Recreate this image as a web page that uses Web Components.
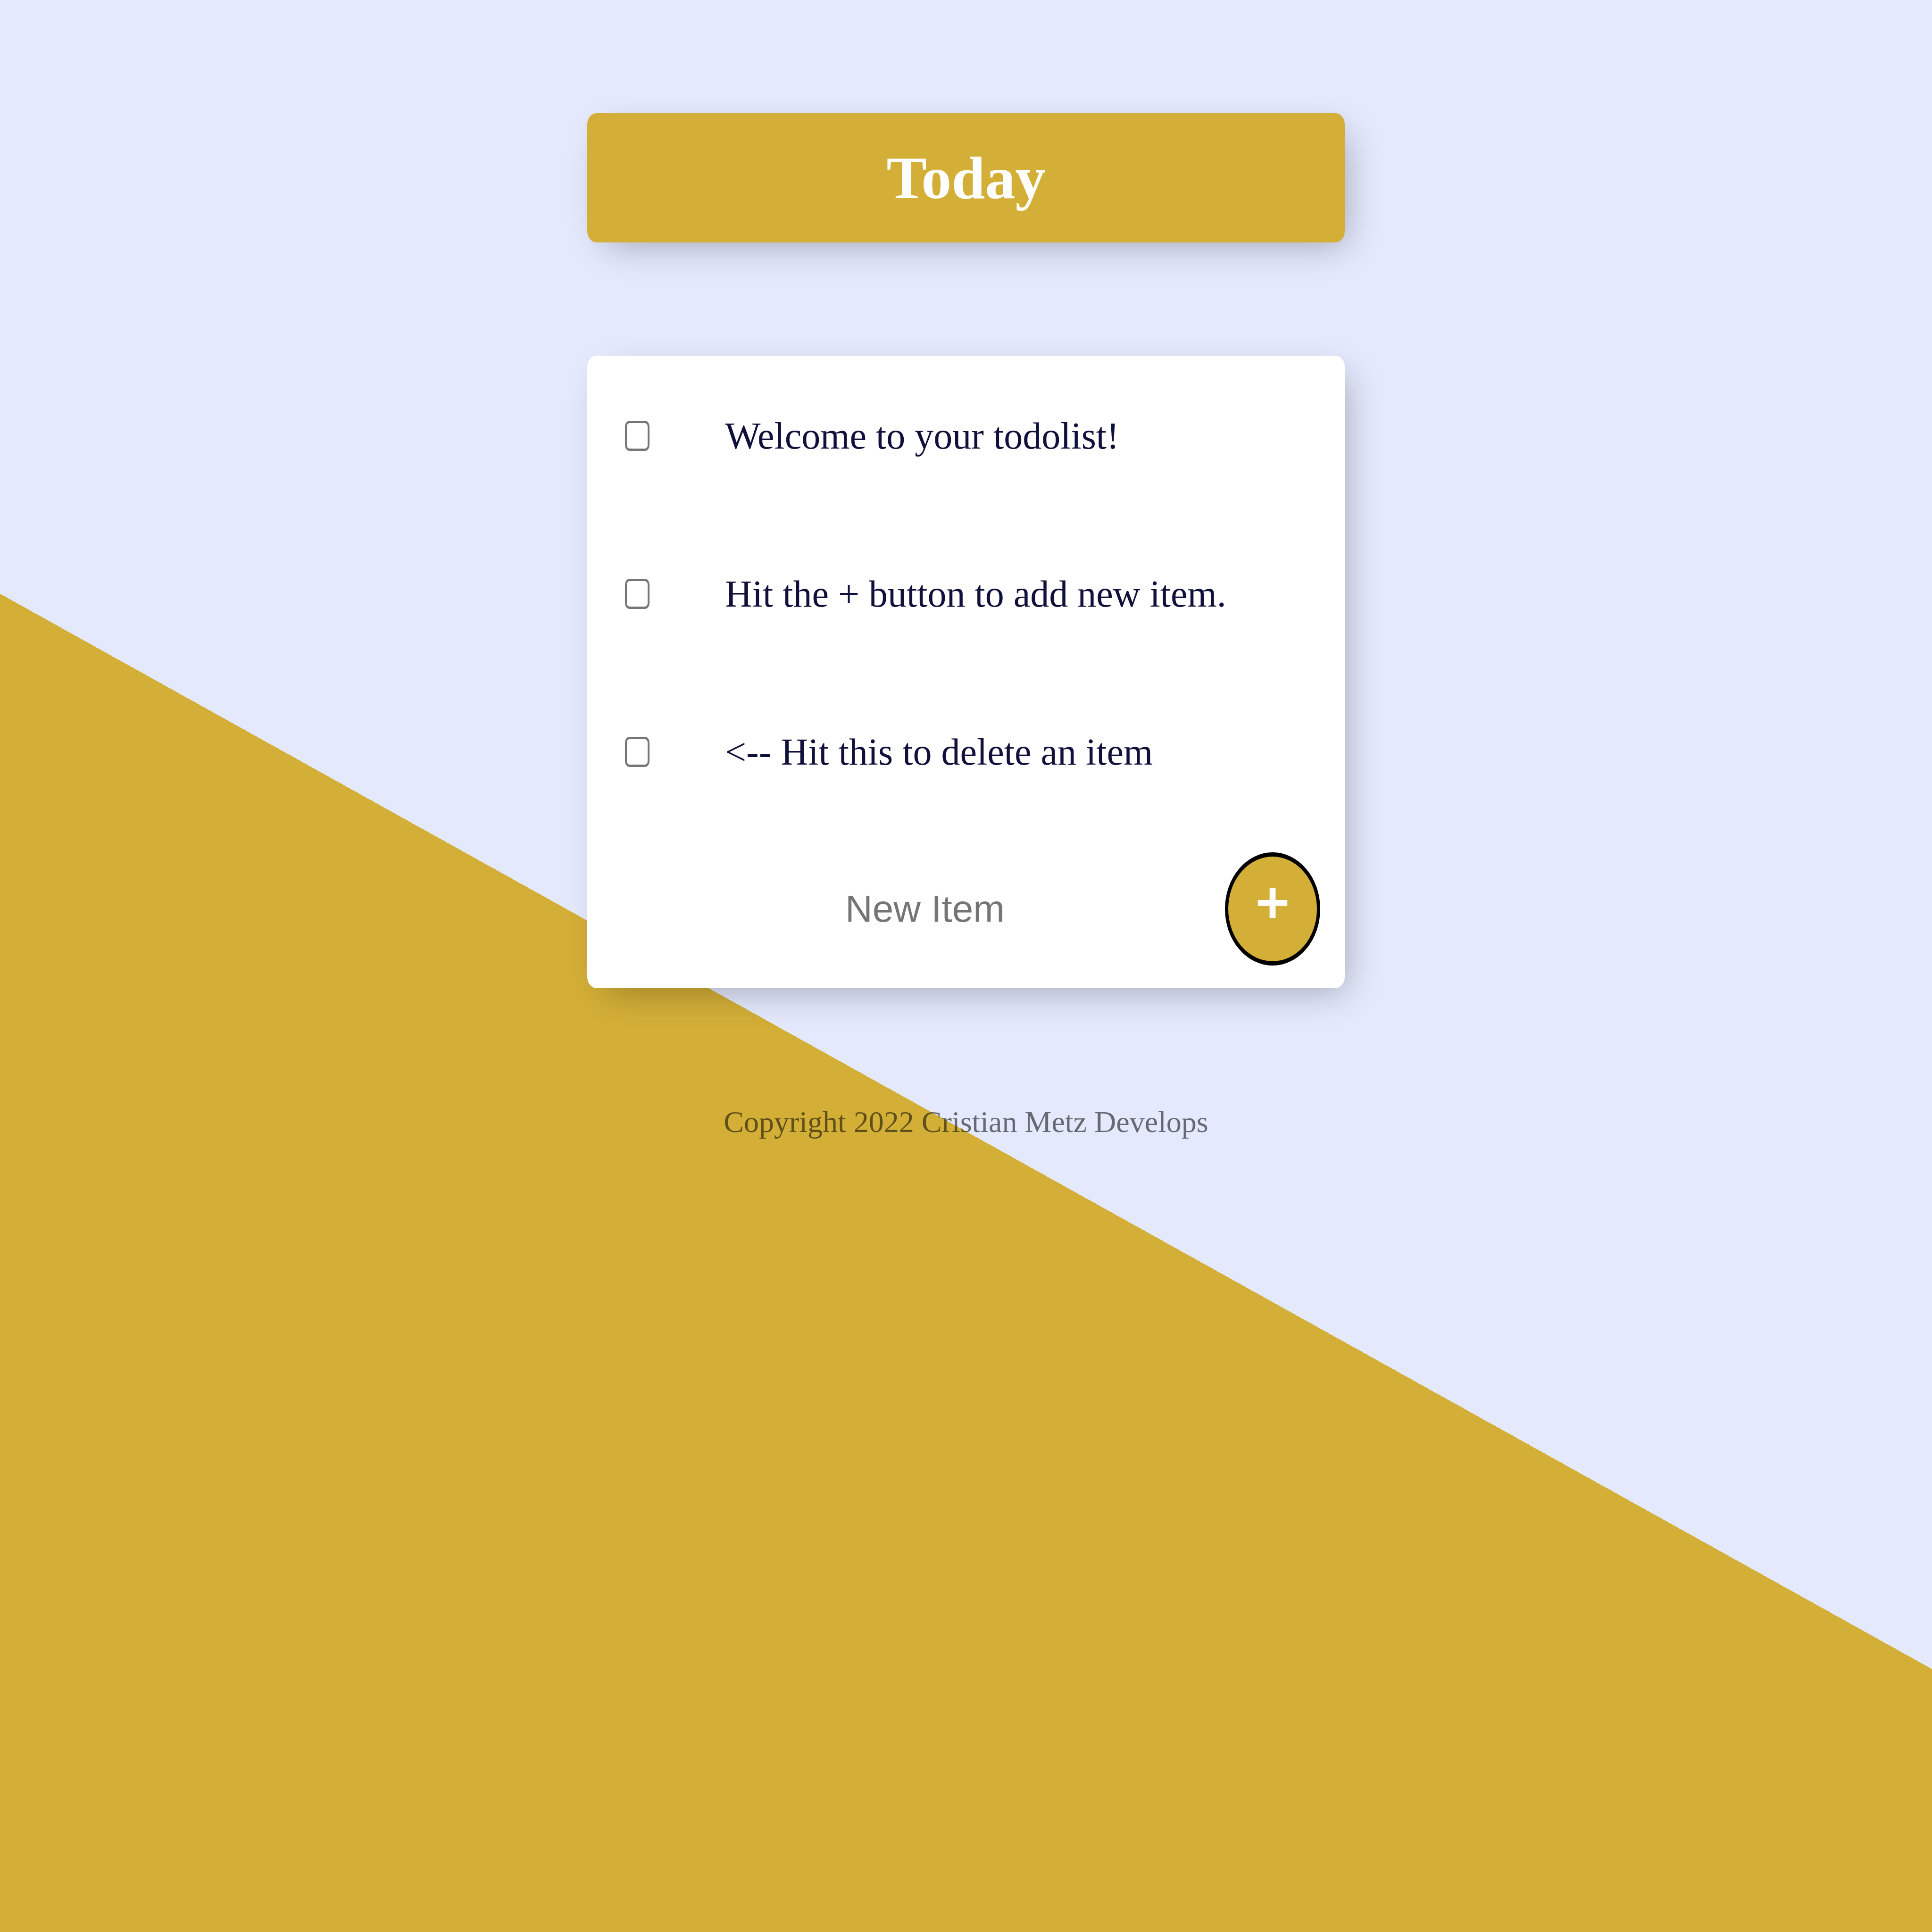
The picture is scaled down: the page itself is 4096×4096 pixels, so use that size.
<!DOCTYPE html>
<html lang="en">
<head>
<meta charset="utf-8">
<title>To Do List</title>
<style>
  html { height: 100%; }
  body {
    margin: 0;
    min-height: 100%;
    --gold: #d3af37;
    --ink: #10103c;
    background: linear-gradient(29.1deg, #d3af37 44.5%, #e4e9fd 44.5%) no-repeat;
    font-family: "Liberation Serif", "Times New Roman", serif;
  }
</style>
</head>
<body>
<todo-page>
  <todo-heading slot="heading">Today</todo-heading>
  <todo-list>
    <todo-item>Welcome to your todolist!</todo-item>
    <todo-item>Hit the + button to add new item.</todo-item>
    <todo-item>&lt;-- Hit this to delete an item</todo-item>
    <todo-form slot="form"></todo-form>
  </todo-list>
  <todo-footer slot="footer">Copyright 2022 Cristian Metz Develops</todo-footer>
</todo-page>
<script>
const define = (name, html) => {
  const template = document.createElement('template');
  template.innerHTML = html;
  customElements.define(name, class extends HTMLElement {
    constructor() {
      super();
      this.attachShadow({ mode: 'open' }).append(template.content.cloneNode(true));
    }
  });
};

const card = `
  border-radius: 20px / 24px;
  box-shadow: 20px 24px 72px -20px rgba(0, 0, 0, .3);
`;

define('todo-page', `
  <style>
    :host { display: block; }
    main {
      display: flex; flex-direction: column; gap: 240px;
      box-sizing: border-box; width: 1606px; max-width: 100%;
      margin: 0 auto; padding-top: 240px;
    }
  </style>
  <main>
    <slot name="heading"></slot>
    <slot></slot>
    <slot name="footer"></slot>
  </main>`);

define('todo-heading', `
  <style>
    :host { display: block; background: var(--gold); padding: 64px; ${card} }
    h1 { margin: 0; font-size: 128px; line-height: 146px; text-align: center; color: #fff; }
  </style>
  <h1><slot></slot></h1>`);

define('todo-list', `
  <style>
    :host { display: block; background: #fff; ${card} }
  </style>
  <slot></slot><slot name="form"></slot>`);

define('todo-item', `
  <style>
    :host { display: block; }
    label {
      display: flex; align-items: center; gap: 160px;
      box-sizing: border-box; min-height: 335px; padding: 4px 80px 0;
      font-size: 80px; line-height: 96px; color: var(--ink);
    }
    input {
      appearance: none; flex: none; box-sizing: border-box;
      width: 52px; height: 64px; margin: 0;
      border: solid #767676; border-width: 5px 4px;
      border-radius: 10px / 12px; background: #fff;
    }
    input:checked { background: var(--gold); }
    input:checked + span { text-decoration: line-through; }
  </style>
  <label><input type="checkbox"><span><slot></slot></span></label>`);

define('todo-form', `
  <style>
    :host { display: block; }
    form {
      display: flex; align-items: center;
      box-sizing: border-box; min-height: 336px; padding: 0 52px 0 80px;
    }
    input {
      flex: 1; min-width: 0; box-sizing: border-box; height: 240px;
      margin: 0; padding: 0; border: 0; background: transparent; outline: none;
      font: 80px "Liberation Sans", Arial, sans-serif; text-align: center; color: var(--ink);
    }
    input::placeholder { color: #757575; opacity: 1; }
    button {
      flex: none; box-sizing: border-box; width: 202px; height: 240px;
      margin: 0; padding: 0 0 28px; border: solid #000; border-width: 9px 7px;
      border-radius: 50%; background: var(--gold); color: #fff;
      font: 120px "Liberation Sans", Arial, sans-serif; line-height: 120px;
      -webkit-text-stroke: 4px #fff;
    }
  </style>
  <form onsubmit="return false">
    <input type="text" placeholder="New Item" aria-label="New Item" autocomplete="off">
    <button type="submit">+</button>
  </form>`);

define('todo-footer', `
  <style>
    :host { display: block; }
    p { margin: 0; font-size: 64px; line-height: 88px; text-align: center; color: rgba(0, 0, 0, .55); }
  </style>
  <footer><p><slot></slot></p></footer>`);
</script>
</body>
</html>
